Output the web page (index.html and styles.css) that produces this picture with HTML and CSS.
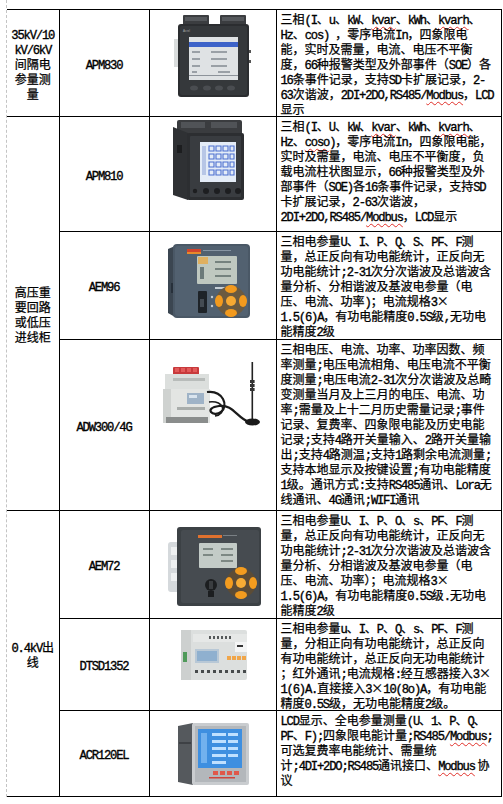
FILE: index.html
```html
<!DOCTYPE html>
<html lang="zh">
<head>
<meta charset="utf-8">
<title>设备选型表</title>
<link rel="stylesheet" href="styles.css">
</head>
<body>
<div class="page">
<table class="spec">
<colgroup>
<col class="c1"><col class="c2"><col class="c3"><col class="c4">
</colgroup>
<tbody>
<tr class="r1">
<td class="cat"><span class="m">35kV/10</span><br><span class="m">kV/6kV</span><br>间隔电<br>参量测<br>量</td>
<td class="model"><span class="m">APM830</span></td>
<td class="pic"><svg class="dev d1" width="100" height="84" viewBox="0 0 100 84">
<rect x="20" y="0" width="26" height="12" rx="1" fill="#3b3d40"/>
<rect x="57" y="0" width="26" height="12" rx="1" fill="#3b3d40"/>
<rect x="22" y="2" width="22" height="4" fill="#55585c"/>
<rect x="59" y="2" width="22" height="4" fill="#55585c"/>
<rect x="11" y="24" width="5" height="28" fill="#d9dcdc"/>
<rect x="15" y="9" width="71" height="73" rx="3" fill="#2b2d30"/>
<rect x="17" y="11" width="67" height="69" rx="2" fill="#35383b"/>
<text x="20" y="17" font-size="3" fill="#aaa" font-family="Liberation Sans">Acrel</text>
<rect x="26" y="22" width="49" height="43" fill="#dfe2e4"/>
<rect x="26" y="27" width="49" height="5" fill="#3d63c9"/>
<rect x="29" y="36" width="8" height="2" fill="#9aa0a6"/>
<rect x="48" y="36" width="16" height="2" fill="#9aa0a6"/>
<rect x="29" y="43" width="8" height="2" fill="#9aa0a6"/>
<rect x="48" y="43" width="16" height="2" fill="#9aa0a6"/>
<rect x="29" y="50" width="8" height="2" fill="#9aa0a6"/>
<rect x="48" y="50" width="16" height="2" fill="#9aa0a6"/>
<rect x="29" y="56" width="5" height="2" fill="#9aa0a6"/>
<rect x="55" y="56" width="12" height="2" fill="#9aa0a6"/>
<rect x="26" y="60" width="49" height="1" fill="#8d939a"/>
<ellipse cx="31" cy="73" rx="4" ry="2.5" fill="#4a4d51"/>
<ellipse cx="44" cy="73" rx="4" ry="2.5" fill="#4a4d51"/>
<ellipse cx="56" cy="73" rx="4" ry="2.5" fill="#4a4d51"/>
<ellipse cx="68" cy="73" rx="4" ry="2.5" fill="#4a4d51"/>
<rect x="86" y="35" width="2" height="3" fill="#555"/>
<rect x="86" y="45" width="2" height="3" fill="#555"/>
</svg></td>
<td class="desc">三相<span class="m">(I</span>、<span class="m">u</span>、<span class="m">kW</span>、<span class="m sp">kvar</span>、<span class="m">kWh</span>、<span class="m sp">kvarh</span>、<br><span class="m">Hz</span>、<span class="m">cos) </span>，零序电流<span class="m">In</span>，四象限电<br>能，实时及需量，电流、电压不平衡<br>度，<span class="m">66</span>种报警类型及外部事件（<span class="m">SOE</span>）各<br><span class="m">16</span>条事件记录，支持<span class="m">SD</span>卡扩展记录，<span class="m">2-</span><br><span class="m">63</span>次谐波，<span class="m">2DI+2DO,RS485/</span><span class="m sp">Modbus</span>，<span class="m">LCD</span><br>显示</td>
</tr>
<tr class="r2">
<td class="cat" rowspan="3">高压重<br>要回路<br>或低压<br>进线柜</td>
<td class="model"><span class="m">APM810</span></td>
<td class="pic"><svg class="dev d2" width="100" height="84" viewBox="0 0 100 84">
<rect x="14" y="1" width="65" height="16" rx="2" fill="#3a3c3f"/>
<rect x="18" y="3" width="24" height="6" fill="#505357"/>
<rect x="48" y="3" width="26" height="6" fill="#505357"/>
<polygon points="10,8 25,14 25,81 10,76" fill="#2f3134"/>
<rect x="14" y="26" width="5" height="8" fill="#1c1d1f"/>
<rect x="24" y="14" width="57" height="67" rx="2" fill="#2c2e31"/>
<rect x="27" y="17" width="51" height="61" rx="1" fill="#393c40"/>
<rect x="37" y="23" width="36" height="40" fill="#e4ecf7"/>
<g fill="none" stroke="#4b6fd0" stroke-width="1.1">
<path d="M46 27 h5 v5 h-5 z M53 27 h5 v5 h-5 z M60 27 h5 v5 h-5 z M67 27 h4 v5 h-4 z"/>
<path d="M46 35 h5 v5 h-5 z M53 35 h5 v5 h-5 z M60 35 h5 v5 h-5 z M67 35 h4 v5 h-4 z"/>
<path d="M46 43 h5 v5 h-5 z M53 43 h5 v5 h-5 z M60 43 h5 v5 h-5 z M67 43 h4 v5 h-4 z"/>
<path d="M46 51 h5 v5 h-5 z M53 51 h5 v5 h-5 z M60 51 h5 v5 h-5 z M67 51 h4 v5 h-4 z"/>
</g>
<rect x="39" y="27" width="4" height="29" fill="#b7c6e6"/>
<circle cx="32" cy="72" r="2.2" fill="#1d1e20"/>
<circle cx="43" cy="72" r="3" fill="#1d1e20"/>
<circle cx="54" cy="72" r="3" fill="#1d1e20"/>
<circle cx="65" cy="72" r="3" fill="#1d1e20"/>
<circle cx="75" cy="72" r="3" fill="#1d1e20"/>
</svg></td>
<td class="desc">三相<span class="m">(I</span>、<span class="m">U</span>、<span class="m">kW</span>、<span class="m sp">kvar</span>、<span class="m">kWh</span>、<span class="m sp">kvarh</span>、<br><span class="m">Hz</span>、<span class="m sp">coso</span><span class="m">)</span>，零序电流<span class="m">In</span>，四象限电能，<br>实时及需量，电流、电压不平衡度，负<br>载电流柱状图显示，<span class="m">66</span>种报警类型及外<br>部事件（<span class="m">SOE)</span>各<span class="m">16</span>条事件记录，支持<span class="m">SD</span><br>卡扩展记录，<span class="m">2-63</span>次谐波，<br><span class="m">2DI+2DO,RS485/</span><span class="m sp">Modbus</span>，<span class="m">LCD</span>显示</td>
</tr>
<tr class="r3">
<td class="model"><span class="m">AEM96</span></td>
<td class="pic"><svg class="dev d3" width="100" height="76" viewBox="0 0 100 76">
<polygon points="5,6 12,3 12,74 5,70" fill="#3b4651"/>
<rect x="8" y="40" width="4" height="10" fill="#27303a"/>
<rect x="10" y="1" width="77" height="74" rx="4" fill="#4a5866"/>
<rect x="12" y="3" width="73" height="70" rx="3" fill="#526170"/>
<rect x="24" y="6" width="14" height="3" fill="#d2442c"/>
<rect x="24" y="9" width="14" height="2" fill="#e88a2a"/>
<rect x="40" y="7" width="28" height="1" fill="#8795a3"/>
<rect x="34" y="13" width="40" height="28" rx="1" fill="#bfc8c0"/>
<rect x="35" y="14" width="10" height="7" fill="#e0b060"/>
<rect x="37" y="24" width="4" height="12" fill="#6c7a7a"/>
<rect x="52" y="18" width="16" height="2" fill="#75827e"/>
<rect x="52" y="25" width="16" height="2" fill="#75827e"/>
<rect x="52" y="32" width="16" height="2" fill="#75827e"/>
<rect x="52" y="44" width="16" height="2" fill="#c5ced6"/>
<rect x="35" y="48" width="9" height="22" rx="1" fill="#1e2328"/>
<rect x="37" y="56" width="4" height="8" fill="#444b52"/>
<circle cx="49" cy="54" r="1.2" fill="#c5ced6"/>
<circle cx="49" cy="63" r="1.2" fill="#c5ced6"/>
<circle cx="68" cy="58" r="15" fill="#6b5a40"/>
<ellipse cx="68" cy="46" rx="6" ry="4" fill="#f29a1e"/>
<ellipse cx="68" cy="70" rx="6" ry="4" fill="#f29a1e"/>
<ellipse cx="56" cy="58" rx="4" ry="6" fill="#f29a1e"/>
<ellipse cx="80" cy="58" rx="4" ry="6" fill="#f29a1e"/>
<circle cx="68" cy="58" r="5" fill="#f7a932"/>
</svg></td>
<td class="desc">三相电参量<span class="m">U</span>、<span class="m">I</span>、<span class="m">P</span>、<span class="m">Q</span>、<span class="m">S</span>、<span class="m">PF</span>、<span class="m">F</span>测<br>量，总正反向有功电能统计，正反向无<br>功电能统计<span class="m">;2-31</span>次分次谐波及总谐波含<br>量分析、分相谐波及基波电参量（电<br>压、电流、功率<span class="m">)</span>；电流规格<span class="m">3</span>×<br><span class="m">1.5(6)A</span>，有功电能精度<span class="m">0.5S</span>级<span class="m">,</span>无功电<br>能精度<span class="m">2</span>级</td>
</tr>
<tr class="r4">
<td class="model"><span class="m">ADW300/4G</span></td>
<td class="pic"><svg class="dev d4" width="100" height="66" viewBox="0 0 100 66">
<rect x="10" y="5" width="26" height="8" rx="1" fill="#c83a3c"/>
<rect x="12" y="6" width="4" height="4" fill="#e25a5a"/>
<rect x="18" y="6" width="4" height="4" fill="#e25a5a"/>
<rect x="24" y="6" width="4" height="4" fill="#e25a5a"/>
<rect x="30" y="6" width="4" height="4" fill="#e25a5a"/>
<rect x="2" y="12" width="44" height="16" fill="#dcdfdd"/>
<rect x="0" y="27" width="47" height="34" fill="#e3e5e3"/>
<rect x="0" y="27" width="8" height="34" fill="#cfd2d0"/>
<rect x="10" y="16" width="32" height="3" fill="#b8bcba"/>
<rect x="24" y="31" width="17" height="11" fill="#9fb3c7"/>
<rect x="26" y="33" width="8" height="3" fill="#d9e4ee"/>
<rect x="14" y="45" width="28" height="3" fill="#a9adab"/>
<rect x="3" y="55" width="42" height="6" fill="#8a8d8c"/>
<path d="M44 30 C60 28 66 44 58 50 C50 56 40 46 56 44 C70 42 74 56 86 60" fill="none" stroke="#1b1b1b" stroke-width="2.2"/>
<path d="M46 40 C62 38 64 52 52 54" fill="none" stroke="#1b1b1b" stroke-width="1.6"/>
<rect x="88.5" y="0" width="1.6" height="58" fill="#222"/>
<rect x="87" y="18" width="4.6" height="3" fill="#333"/>
<rect x="87" y="22" width="4.6" height="3" fill="#333"/>
<rect x="87" y="26" width="4.6" height="3" fill="#333"/>
<ellipse cx="89.5" cy="60" rx="7.5" ry="3.5" fill="#1a1a1a"/>
</svg></td>
<td class="desc">三相电压、电流、功率、功率因数、频<br>率测量<span class="m">;</span>电压电流相角、电压电流不平衡<br>度测量<span class="m">;</span>电压电流<span class="m">2-31</span>次分次谐波及总畸<br>变测量当月及上三月的电压、电流、功<br>率<span class="m">;</span>需量及上十二月历史需量记录<span class="m">;</span>事件<br>记录、复费率、四象限电能及历史电能<br>记录<span class="m">;</span>支持<span class="m">4</span>路开关量输入、<span class="m">2</span>路开关量输<br>出<span class="m">;</span>支持<span class="m">4</span>路测温<span class="m">;</span>支持<span class="m">1</span>路剩余电流测量<span class="m">;</span><br>支持本地显示及按键设置<span class="m">;</span>有功电能精度<br><span class="m">1</span>级。通讯方式<span class="m">:</span>支持<span class="m">RS485</span>通讯、<span class="m">Lora</span>无<br>线通讯、<span class="m">4G</span>通讯<span class="m">;WIFI</span>通讯</td>
</tr>
<tr class="r5">
<td class="cat" rowspan="3"><span class="m">0.4kV</span>出<br>线</td>
<td class="model"><span class="m">AEM72</span></td>
<td class="pic"><svg class="dev d5" width="100" height="82" viewBox="0 0 100 82">
<rect x="5" y="17" width="22" height="50" rx="3" fill="#d5d9dc"/>
<rect x="8" y="22" width="16" height="8" fill="#eef0f1"/>
<rect x="8" y="35" width="16" height="8" fill="#eef0f1"/>
<rect x="8" y="48" width="16" height="8" fill="#eef0f1"/>
<rect x="14" y="2" width="84" height="79" rx="3" fill="#3c4145"/>
<rect x="18" y="5" width="78" height="73" rx="2" fill="#464b50"/>
<rect x="35" y="10" width="24" height="3" fill="#e0712e"/>
<rect x="60" y="10" width="14" height="1" fill="#7a8085"/>
<rect x="36" y="18" width="38" height="25" rx="1" fill="#c3cbc7"/>
<rect x="40" y="23" width="10" height="2" fill="#7d8884"/>
<rect x="40" y="29" width="10" height="2" fill="#7d8884"/>
<rect x="58" y="23" width="12" height="2" fill="#7d8884"/>
<rect x="58" y="29" width="12" height="2" fill="#7d8884"/>
<rect x="58" y="35" width="12" height="2" fill="#7d8884"/>
<circle cx="48" cy="60" r="6" fill="#1c1e20"/>
<rect x="46" y="56" width="4" height="8" fill="#3a3d40"/>
<rect x="45" y="66" width="6" height="6" fill="#1c1e20"/>
<circle cx="78" cy="58" r="15" fill="#5c4c36"/>
<ellipse cx="78" cy="46" rx="6" ry="4" fill="#f39c1f"/>
<ellipse cx="78" cy="70" rx="6" ry="4" fill="#f39c1f"/>
<ellipse cx="66" cy="58" rx="4" ry="6" fill="#f39c1f"/>
<ellipse cx="90" cy="58" rx="4" ry="6" fill="#f39c1f"/>
<circle cx="78" cy="58" r="5" fill="#f7ac35"/>
</svg></td>
<td class="desc">三相电参量<span class="m">U</span>、<span class="m">I</span>、<span class="m">P</span>、<span class="m">O</span>、<span class="m">s</span>、<span class="m">PF</span>、<span class="m">F</span>测<br>量，总正反向有功电能统计，正反向无<br>功电能统计<span class="m">;2-31</span>次分次谐波及总谐波含<br>量分析、分相谐波及基波电参量（电<br>压、电流、功率）；电流规格<span class="m">3</span>×<br><span class="m">1.5(6)A</span>，有功电能精度<span class="m">0.5S</span>级<span class="m">.</span>无功电<br>能精度<span class="m">2</span>级</td>
</tr>
<tr class="r6">
<td class="model"><span class="m">DTSD1352</span></td>
<td class="pic"><svg class="dev d6" width="100" height="54" viewBox="0 0 100 54">
<rect x="18" y="2" width="66" height="50" rx="2" fill="#dcdfde"/>
<rect x="18" y="2" width="10" height="50" fill="#cdd0cf"/>
<rect x="20" y="24" width="4" height="10" fill="#4f9a5a"/>
<rect x="30" y="6" width="54" height="8" fill="#e6e8e7"/>
<g fill="#55595a"><rect x="46" y="8" width="2" height="3"/><rect x="50" y="8" width="2" height="3"/><rect x="54" y="8" width="2" height="3"/><rect x="58" y="8" width="2" height="3"/><rect x="62" y="8" width="2" height="3"/><rect x="66" y="8" width="2" height="3"/></g>
<rect x="72" y="14" width="12" height="10" fill="#f4f5f5"/>
<rect x="74" y="17" width="6" height="2" fill="#333"/>
<rect x="32" y="21" width="24" height="14" fill="#b8c8d6"/>
<rect x="34" y="23" width="20" height="10" fill="#8fb0cf"/>
<rect x="64" y="28" width="4" height="4" fill="#f0a64a"/>
<rect x="69" y="28" width="4" height="4" fill="#f0a64a"/>
<rect x="74" y="28" width="4" height="4" fill="#f0a64a"/>
<rect x="79" y="28" width="4" height="4" fill="#f0a64a"/>
<g fill="#474b4c"><rect x="32" y="42" width="3" height="3"/><rect x="38" y="42" width="3" height="3"/><rect x="44" y="42" width="3" height="3"/><rect x="50" y="42" width="3" height="3"/><rect x="56" y="42" width="3" height="3"/><rect x="62" y="42" width="3" height="3"/><rect x="68" y="42" width="3" height="3"/><rect x="74" y="42" width="3" height="3"/><rect x="80" y="42" width="3" height="3"/></g>
</svg></td>
<td class="desc">三相电参量<span class="m">u</span>、<span class="m">I</span>、<span class="m">P</span>、<span class="m">Q</span>、<span class="m">s</span>、<span class="m">PF</span>、<span class="m">F</span>测<br>量，分相正向有功电能统计，总正反向<br>有功电能统计，总正反向无功电能统计<br>；红外通讯<span class="m">;</span>电流规格<span class="m">:</span>经互感器接入<span class="m">3</span>×<br><span class="m">1(6)A.</span>直接接入<span class="m">3</span>×<span class="m">10(8o)A</span>，有功电能<br>精度<span class="m">0.5S</span>级，无功电能精度<span class="m">2</span>级。</td>
</tr>
<tr class="r7">
<td class="model"><span class="m">ACR120EL</span></td>
<td class="pic"><svg class="dev d7" width="100" height="64" viewBox="0 0 100 64">
<polygon points="15,4 30,1 30,63 15,60" fill="#55595d"/>
<rect x="16" y="20" width="12" height="2" fill="#3e4145"/>
<rect x="29" y="1" width="57" height="62" rx="2" fill="#c9cccf"/>
<rect x="32" y="4" width="51" height="56" fill="#b3b7bb"/>
<rect x="35" y="7" width="44" height="39" fill="#3e8fe0"/>
<g fill="#bfe0ff">
<rect x="49" y="11" width="14" height="3"/><rect x="65" y="11" width="10" height="3"/>
<rect x="49" y="18" width="14" height="3"/><rect x="65" y="18" width="10" height="3"/>
<rect x="49" y="25" width="14" height="3"/><rect x="65" y="25" width="10" height="3"/>
<rect x="49" y="32" width="14" height="3"/><rect x="65" y="32" width="10" height="3"/>
<rect x="49" y="39" width="14" height="3"/>
</g>
<rect x="38" y="11" width="6" height="30" fill="#72b1ee"/>
<rect x="50" y="49" width="5" height="4" fill="#e0584a"/>
<rect x="57" y="49" width="5" height="4" fill="#e0584a"/>
<rect x="64" y="49" width="5" height="4" fill="#e0584a"/>
<rect x="71" y="49" width="5" height="4" fill="#e0584a"/>
<rect x="46" y="55" width="26" height="1.5" fill="#d0443a"/>
</svg></td>
<td class="desc"><span class="m">LCD</span>显示、全电参量测量<span class="m">(U</span>、<span class="m">1</span>、<span class="m">P</span>、<span class="m">Q</span>、<br><span class="m">PF</span>、<span class="m">F);</span>四象限电能计量<span class="m">;RS485/</span><span class="m sp">Modbus</span><span class="m">;</span><br>可选复费率电能统计、需量统<br>计<span class="m">;4DI+2DO;RS485</span>通讯接口、<span class="m sp">Modbus</span> 协<br>议</td>
</tr>
</tbody>
</table>
</div>
</body>
</html>
```
FILE: styles.css
```css
html, body {
  margin: 0;
  padding: 0;
  background: #ffffff;
}

body {
  font-family: "Noto Sans CJK SC", "Noto Sans CJK TC", sans-serif;
  font-size: 12px;
  line-height: 15px;
  color: #000000;
  -webkit-text-stroke: 0.25px #000000;
}

.page {
  margin-left: 6px;
  padding-top: 9px;
  border-left: 1px dashed #c4c4c4;
  width: 494px;
}

.spec {
  border-collapse: collapse;
  table-layout: fixed;
  width: 494px;
}

.c1 { width: 52px; }
.c2 { width: 90px; }
.c3 { width: 127px; }
.c4 { width: 225px; }

.spec td {
  border: 1px solid #000000;
  padding: 0;
  overflow: hidden;
}

.spec tr td:first-child.cat {
  border-left: none;
}

.r1 { height: 107px; }
.r2 { height: 115px; }
.r3 { height: 108px; }
.r4 { height: 171px; }
.r5 { height: 108px; }
.r6 { height: 92px; }
.r7 { height: 86px; }

.cat {
  text-align: center;
  vertical-align: middle;
  white-space: nowrap;
}

.model {
  text-align: center;
  vertical-align: middle;
  white-space: nowrap;
}

.pic {
  vertical-align: top;
  -webkit-text-stroke: 0;
}

.desc {
  vertical-align: top;
  white-space: nowrap;
  padding: 1px 2px 0 4px !important;
}

.m {
  font-family: "Liberation Mono", monospace;
  font-size: 12.2px;
  letter-spacing: -1.2px;
  line-height: 10px;
  -webkit-text-stroke: 0.35px #000000;
}

.sp {
  text-decoration: underline wavy #e0302a;
  text-decoration-thickness: 1px;
  text-underline-offset: 2px;
}

.dev {
  display: block;
  margin-left: 13px;
}

.d1 { margin-top: 5px; }
.d2 { margin-top: 2px; }
.d3 { margin-top: 11px; }
.d4 { margin-top: 22px; }
.d5 { margin-top: 14px; }
.d6 { margin-top: 9px; }
.d7 { margin-top: 11px; }
```
